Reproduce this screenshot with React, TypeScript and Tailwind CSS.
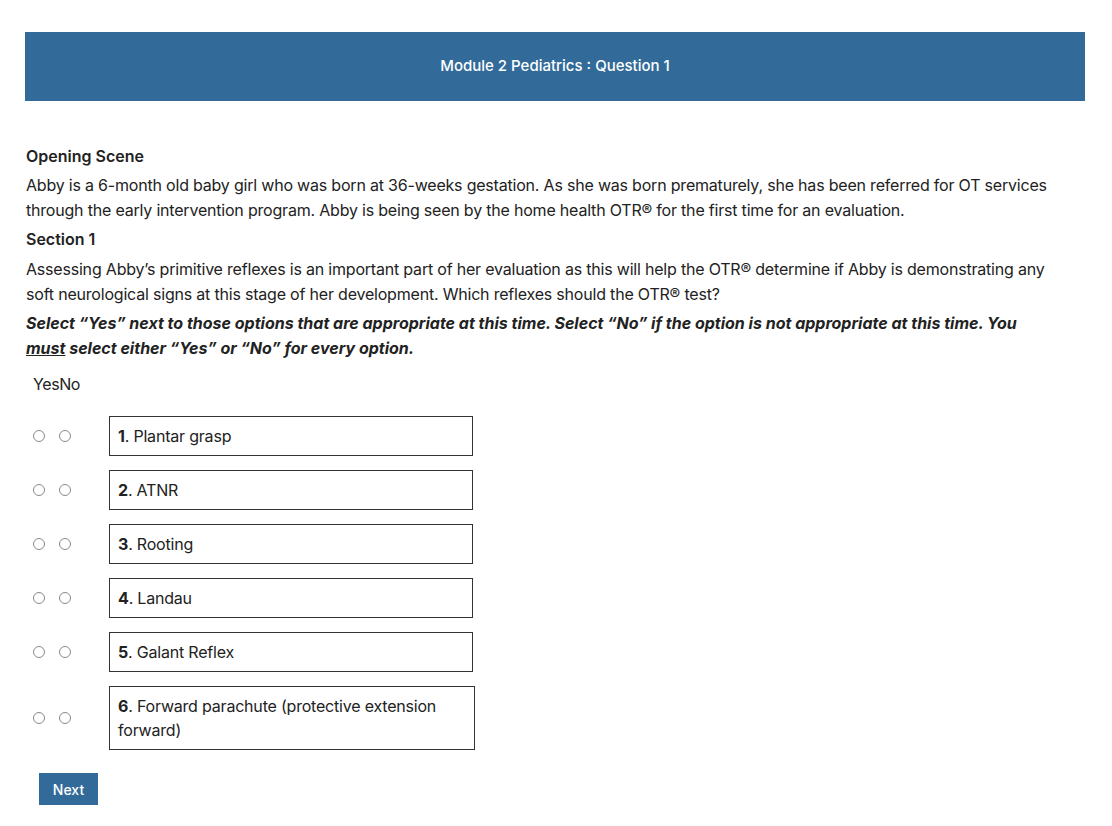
import React from "react";

const items = [
  { n: "1", t: "Plantar grasp" },
  { n: "2", t: "ATNR" },
  { n: "3", t: "Rooting" },
  { n: "4", t: "Landau" },
  { n: "5", t: "Galant Reflex" },
  { n: "6", t: "Forward parachute (protective extension forward)" },
];

function Radio() {
  return <span className="block w-[12px] h-[12px] rounded-full border border-[#8a8a8a] bg-white" />;
}

export default function App() {
  return (
    <div className="min-h-[826px] bg-white text-[#222] font-['Inter','Liberation_Sans',sans-serif]">
      <div className="pt-[32px] px-[25px] w-[1112px]">
        <div className="w-[1060px] h-[69px] bg-[#326b9a] flex items-center justify-center text-white text-[15px] font-medium">
          Module 2 Pediatrics : Question 1
        </div>
        <div className="pt-[43px] pl-[1px] w-[1060px] text-[16px] leading-[25px]">
          <div className="font-semibold mb-[4px]">Opening Scene</div>
          <p className="mb-[4px] w-[1040px] tracking-[-0.2px]">
            Abby is a 6-month old baby girl who was born at 36-weeks gestation. As she was born prematurely, she has been referred for OT services through the early intervention program. Abby is being seen by the home health OTR® for the first time for an evaluation.
          </p>
          <div className="font-semibold mb-[5px]">Section 1</div>
          <p className="mb-[4px] w-[1040px] tracking-[-0.2px]">
            Assessing Abby’s primitive reflexes is an important part of her evaluation as this will help the OTR® determine if Abby is demonstrating any soft neurological signs at this stage of her development. Which reflexes should the OTR® test?
          </p>
          <p className="font-bold italic w-[1020px]">
            Select “Yes” next to those options that are appropriate at this time. Select “No” if the option is not appropriate at this time. You <span className="underline">must</span> select either “Yes” or “No” for every option.
          </p>
        </div>
        <div className="pl-[8px] pt-[11px] text-[16px] tracking-[-0.4px] leading-[25px]">YesNo</div>
        <div className="pt-[19px] flex flex-col gap-[14px]">
          {items.map((it) => (
            <div key={it.n} className="flex items-center">
              <div className="flex gap-[14px] pl-[8px] w-[84px]">
                <Radio />
                <Radio />
              </div>
              <div className={`${it.n === "6" ? "w-[366px]" : "w-[364px]"} border border-[#333] px-[8px] py-[7px] text-[16px] leading-[24px] tracking-[-0.2px]`}>
                <span className="font-bold">{it.n}</span>. {it.t}
              </div>
            </div>
          ))}
        </div>
        <div className="pt-[23px] pl-[14px]">
          <button className="w-[59px] h-[32px] bg-[#326b9a] text-white text-[14px] font-medium">Next</button>
        </div>
      </div>
    </div>
  );
}
